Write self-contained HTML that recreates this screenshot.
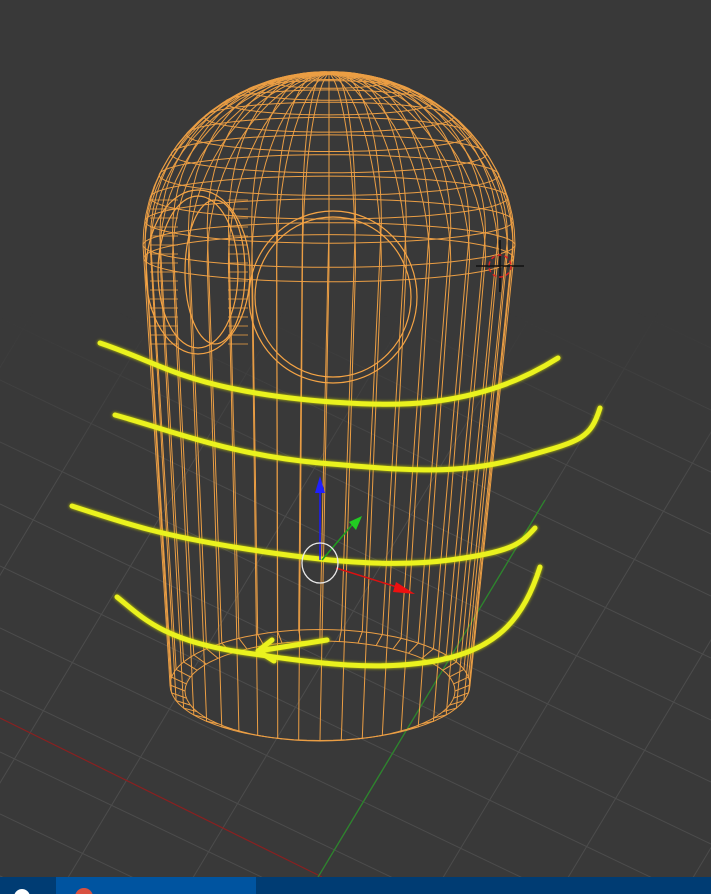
<!DOCTYPE html>
<html><head><meta charset="utf-8"><style>
html,body{margin:0;padding:0;background:#393939;width:711px;height:894px;overflow:hidden}
svg{display:block}
</style></head><body>
<svg id="s" width="711" height="894" viewBox="0 0 711 894" xmlns="http://www.w3.org/2000/svg">
<defs>
<linearGradient id="fg" x1="0" y1="0" x2="0" y2="1"><stop offset="0.35" stop-color="#fff" stop-opacity="0"/><stop offset="0.55" stop-color="#fff" stop-opacity="1"/></linearGradient>
<mask id="gm"><rect width="711" height="894" fill="url(#fg)"/></mask>
</defs>
<rect width="711" height="894" fill="#393939"/>
<g id="grid" stroke="#4c4c4c" stroke-width="1" fill="none" mask="url(#gm)"></g>
<line x1="0" y1="718" x2="322" y2="877" stroke="#8a2020" stroke-width="1.2"/>
<line x1="545" y1="500" x2="318" y2="877" stroke="#2a8a2a" stroke-width="1.2"/>
<g id="wire" stroke="#f5a445" stroke-width="1" fill="none" opacity="0.95"></g>
<g stroke="#f5a445" stroke-width="1.2" fill="none">
<ellipse cx="333" cy="297" rx="84" ry="86"/>
<ellipse cx="333" cy="297" rx="78" ry="80"/>
<ellipse cx="198" cy="272" rx="52" ry="82"/>
<ellipse cx="215" cy="272" rx="30" ry="72"/>
<ellipse cx="198" cy="272" rx="40" ry="76"/>
</g>
<g stroke="#f5a445" stroke-width="0.8" fill="none" id="ear"></g>
<g stroke="#eaf21e" stroke-width="5" fill="none" stroke-linecap="round" stroke-linejoin="round" style="filter:drop-shadow(0 0 1.5px #c8d000)">
<path d="M100,343 C150,360 170,375 230,388 S380,408 430,402 S520,382 558,358"/>
<path d="M115,415 C170,430 230,455 320,463 S460,475 520,458 S590,440 600,408"/>
<path d="M72,506 C130,525 160,535 240,548 S390,568 450,560 S520,545 535,528"/>
<path d="M117,597 C140,615 160,640 240,652 S380,672 440,660 S525,615 540,567"/>
<path d="M327,640 L258,651 M272,640 L258,651 L274,661"/>
</g>
<line x1="320" y1="560" x2="320" y2="490" stroke="#1a1aff" stroke-width="1.5"/>
<polygon points="320,476 315,493 325,493" fill="#2020ff"/>
<line x1="322" y1="560" x2="352" y2="525" stroke="#1ea01e" stroke-width="1.5"/>
<polygon points="362,516 349,522 356,530" fill="#22cc22"/>
<line x1="336" y1="568" x2="400" y2="588" stroke="#dd1010" stroke-width="1.5"/>
<polygon points="415,594 396,582 393,592" fill="#ee1010"/>
<ellipse cx="320" cy="563" rx="18" ry="20" stroke="#e8e8e8" stroke-width="1.3" fill="none"/>
<g stroke="#111" stroke-width="1.5"><line x1="500" y1="240" x2="500" y2="292"/><line x1="476" y1="266" x2="524" y2="266"/></g>
<circle cx="500" cy="266" r="11" stroke="#dd2020" stroke-width="1.5" fill="none" stroke-dasharray="4 3"/>
<rect x="0" y="877" width="711" height="17" fill="#003c73"/>
<rect x="56" y="877" width="200" height="17" fill="#0054a0"/>
<circle cx="84" cy="897" r="9" fill="#d85040"/>
<circle cx="22" cy="897" r="8" fill="#ffffff"/>
</svg>
<script>
var NS="http://www.w3.org/2000/svg";
function L(g,pts){var p=document.createElementNS(NS,"path");p.setAttribute("d","M"+pts.map(function(a){return a[0].toFixed(1)+","+a[1].toFixed(1)}).join(" L"));g.appendChild(p);}
var grid=document.getElementById("grid");
for(var i=-8;i<12;i++){var y0=380+i*62;L(grid,[[0,y0],[711,y0+340]]);}
for(var j=-6;j<8;j++){var x0=318+j*125;L(grid,[[x0+681,-254],[x0-120,1077]]);}
var wire=document.getElementById("wire");
function sec(t){return {cx:329-9*t, r:186-36*t, y:245+440*t, k:0.12+0.25*t};}
function pt(th,phi,t){
 if(t===undefined){var r=186*Math.cos(phi);return [329+r*Math.sin(th),245-172*Math.sin(phi)+0.12*r*Math.cos(th)];}
 var s=sec(t);return [s.cx+s.r*Math.sin(th),s.y+s.k*s.r*Math.cos(th)];}
function cap(th){var s=sec(1);var r2=s.r*0.9;return [s.cx+r2*Math.sin(th),s.y+6+s.k*r2*Math.cos(th)];}
var N=44;
for(var i=0;i<N;i++){var th=i/N*2*Math.PI;var pts=[];
 for(var a=90;a>=0;a-=5)pts.push(pt(th,a*Math.PI/180));
 for(var t=0;t<=1.001;t+=0.05)pts.push(pt(th,0,t));
 pts.push(cap(th));
 L(wire,pts);}
for(var a=8;a<90;a+=8){var pts=[];for(var i=0;i<=72;i++){pts.push(pt(i/72*2*Math.PI,a*Math.PI/180));}L(wire,pts);}
[0,0.03,1].forEach(function(t){var pts=[];for(var i=0;i<=72;i++)pts.push(pt(i/72*2*Math.PI,0,t));L(wire,pts);});
(function(){var pts=[];for(var i=0;i<=72;i++)pts.push(cap(i/72*2*Math.PI));L(wire,pts);})();
var ear=document.getElementById("ear");
for(var y=200;y<350;y+=9)L(ear,[[150,y],[178,y]]);
for(var y=200;y<350;y+=9)L(ear,[[228,y],[248,y]]);
</script>
</body></html>
